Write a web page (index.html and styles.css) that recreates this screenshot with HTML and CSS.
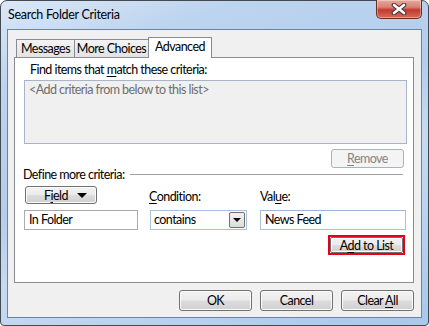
FILE: index.html
```html
<!DOCTYPE html>
<html lang="en">
<head>
    <meta charset="UTF-8">
    <title>Search Folder Criteria</title>
    <link rel="stylesheet" href="styles.css">
</head>
<body>
<div class="window">
    <div class="titlebar">
        <span class="title">Search Folder Criteria</span>
        <button class="close-btn" title="Close">
            <svg width="16" height="12" viewBox="0 0 16 12">
                <path d="M3 2 L13 10 M13 2 L3 10" stroke="#3a3a3a" stroke-width="4.6" stroke-linecap="round"/>
                <path d="M3 2 L13 10 M13 2 L3 10" stroke="#ffffff" stroke-width="2.6" stroke-linecap="round"/>
            </svg>
        </button>
    </div>
    <div class="client">
        <div class="tabs">
            <div class="tab">Messages</div>
            <div class="tab">More Choices</div>
            <div class="tab active">Advanced</div>
        </div>
        <div class="tab-page">
            <div class="label find-label">Find items that <u>m</u>atch these criteria:</div>
            <div class="criteria-list">&lt;Add criteria from below to this list&gt;</div>
            <div class="remove-row">
                <button class="btn btn-small" disabled><u>R</u>emove</button>
            </div>
            <div class="group-title">
                <span>Define more criteria:</span>
                <span class="rule"></span>
            </div>
            <div class="define-grid">
                <button class="btn field-btn"><span>F<u>i</u>eld</span><span class="arrow"></span></button>
                <div class="label"><u>C</u>ondition:</div>
                <div class="label">Val<u>u</u>e:</div>
                <div class="textbox">In Folder</div>
                <div class="textbox combo">
                    <span>contains</span>
                    <span class="combo-drop"><span class="arrow"></span></span>
                </div>
                <div class="textbox textbox-blue">News Feed</div>
                <div class="highlight">
                    <button class="btn btn-small">A<u>d</u>d to List</button>
                </div>
            </div>
        </div>
        <div class="dialog-buttons">
            <button class="btn">OK</button>
            <button class="btn">Cancel</button>
            <button class="btn">Clear <u>A</u>ll</button>
        </div>
    </div>
</div>
</body>
</html>
```

FILE: styles.css
```css
body {
    margin: 0;
    padding: 0;
    font-family: Lato, "Noto Sans", sans-serif;
    font-size: 12.5px;
    letter-spacing: -0.55px;
    color: #000;
    background: #fff;
}
u {
    text-decoration-thickness: 1px;
    text-underline-offset: 2px;
}
.window {
    width: 429px;
    height: 326px;
    box-sizing: border-box;
    border: 1px solid #454a52;
    border-radius: 7px 7px 4px 4px;
    padding: 0 6px;
    background: linear-gradient(160deg, #dbe8f7 0%, #bcd4ef 18%, #b3cdec 45%, #c6dbf2 60%, #a9c8eb 100%);
}
.titlebar {
    height: 28px;
    display: flex;
    justify-content: space-between;
    align-items: flex-start;
}
.title {
    margin: 6px 0 0 1px;
    line-height: 16px;
    font-size: 12.5px;
    letter-spacing: -0.3px;
    color: #000;
}
.close-btn {
    width: 46px;
    height: 19px;
    margin: -1px 0 0 0;
    padding: 0;
    border: 1px solid #6e2a22;
    border-top: none;
    border-radius: 0 0 5px 5px;
    background: linear-gradient(to bottom, #e8a89c 0%, #d88174 40%, #c3392c 55%, #d56d5e 100%);
    box-shadow: inset 0 0 0 1px rgba(255, 255, 255, 0.35);
    display: flex;
    align-items: center;
    justify-content: center;
}
.client {
    width: 415px;
    height: 289px;
    box-sizing: border-box;
    border: 1px solid #6c83a3;
    background: #f0f0f0;
    padding: 7px 0 0 6px;
}
.tabs {
    display: flex;
    height: 20px;
    padding-left: 2px;
    align-items: flex-end;
    position: relative;
    z-index: 1;
}
.tab {
    height: 18px;
    box-sizing: border-box;
    line-height: 17px;
    white-space: nowrap;
    text-align: center;
    border: 1px solid #898c95;
    border-bottom: none;
    background: linear-gradient(to bottom, #f3f3f3, #e3e3e3);
    margin-right: -1px;
}
.tab:nth-child(1) {
    width: 59px;
}
.tab:nth-child(2) {
    width: 75px;
}
.tab.active {
    width: 64px;
    height: 21px;
    margin-bottom: -1px;
    background: #fff;
    line-height: 17px;
}
.tab-page {
    width: 400px;
    height: 226px;
    box-sizing: border-box;
    border: 1px solid #898c95;
    background: #fff;
    padding: 4px 0 0 9px;
}
.label {
    line-height: 15px;
}
.find-label {
    margin-left: 6px;
    height: 18px;
}
.criteria-list {
    width: 383px;
    height: 64px;
    box-sizing: border-box;
    border: 1px solid #a9b5c6;
    background: #f0f0f0;
    color: #6d6d6d;
    padding: 1px 4px;
    line-height: 16px;
}
.remove-row {
    display: flex;
    justify-content: flex-end;
    width: 380px;
    margin-top: 5px;
}
.btn {
    font-family: inherit;
    font-size: inherit;
    letter-spacing: inherit;
    color: #000;
    width: 73px;
    height: 21px;
    padding: 0;
    box-sizing: border-box;
    border: 1px solid #707070;
    border-radius: 3px;
    background: linear-gradient(to bottom, #f2f2f2 0%, #ebebeb 48%, #dddddd 52%, #cfcfcf 100%);
    box-shadow: inset 0 0 0 1px #fcfcfc;
    line-height: 17px;
}
.btn-small {
    height: 19px;
    line-height: 15px;
}
.btn:disabled {
    border-color: #adb2b5;
    background: #f4f4f4;
    color: #838383;
    box-shadow: none;
}
.group-title {
    display: flex;
    align-items: center;
    width: 380px;
    margin: -1px 0 0 -1px;
    height: 15px;
    line-height: 15px;
}
.rule {
    flex: 1;
    height: 1px;
    margin-left: 6px;
    background: #a0a0a0;
    border-bottom: 1px solid #fff;
}
.define-grid {
    display: grid;
    grid-template-columns: 125px 111px 146px;
    grid-template-rows: 18px 20px 20px;
    row-gap: 6px;
    margin-top: 4px;
}
.define-grid .label {
    align-self: end;
    margin-bottom: 0;
}
.field-btn {
    width: 72px;
    height: 18px;
    margin-left: 1px;
    display: flex;
    align-items: center;
    justify-content: space-between;
    padding: 0 9px 0 18px;
    line-height: 15px;
}
.arrow {
    width: 0;
    height: 0;
    border-left: 5px solid transparent;
    border-right: 5px solid transparent;
    border-top: 5px solid #000;
}
.textbox {
    width: 114px;
    height: 20px;
    box-sizing: border-box;
    border: 1px solid #abadb3;
    border-top-color: #a6a8ae;
    background: #fff;
    padding: 0 4px;
    line-height: 18px;
}
.combo {
    width: 97px;
    margin-left: 1px;
    border-color: #a9c1dc;
    display: flex;
    justify-content: space-between;
    align-items: center;
    padding: 0 1px 0 3px;
}
.combo-drop {
    width: 16px;
    height: 16px;
    box-sizing: border-box;
    border: 1px solid #707070;
    border-radius: 2px;
    background: linear-gradient(to bottom, #f2f2f2, #dcdcdc);
    display: flex;
    align-items: center;
    justify-content: center;
}
.combo-drop .arrow {
    border-left-width: 4px;
    border-right-width: 4px;
    border-top-width: 4px;
}
.textbox-blue {
    width: 146px;
    border-color: #a9c1dc;
    border-top-color: #9db6d4;
}
.highlight {
    grid-column: 3;
    justify-self: end;
    margin-right: 1px;
    margin-top: -1px;
    border: 2px solid #e3001b;
    height: 20px;
    box-sizing: border-box;
    display: flex;
}
.highlight .btn {
    width: 73px;
    height: 16px;
    line-height: 13px;
    border-radius: 2px;
}
.dialog-buttons {
    width: 400px;
    display: flex;
    justify-content: flex-end;
    gap: 8px;
    margin-top: 7px;
}
```
